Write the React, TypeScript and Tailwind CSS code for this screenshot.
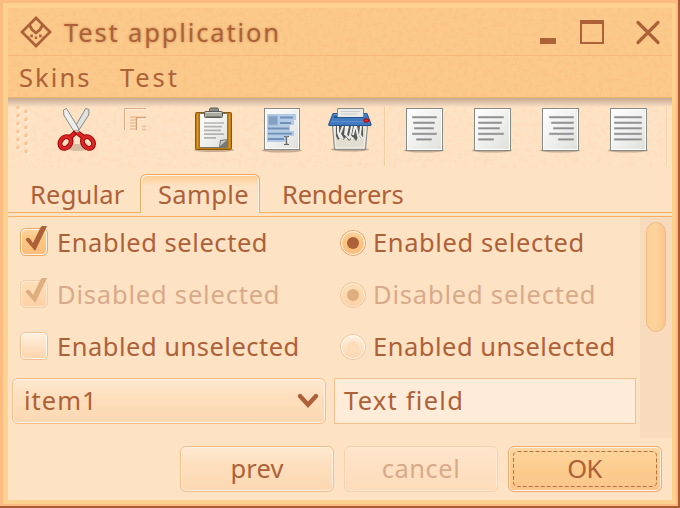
import React from "react";

function Grain({ id, opacity }: { id: string; opacity: number }) {
  return (
    <svg className="pointer-events-none absolute inset-0 h-full w-full" aria-hidden="true">
      <filter id={id} x="0" y="0" width="100%" height="100%">
        <feTurbulence type="fractalNoise" baseFrequency="0.2" numOctaves={3} seed={8} />
        <feColorMatrix values="0 0 0 0 0.93  0 0 0 0 0.4  0 0 0 0 0.18  6 0 0 0 -2.9" />
      </filter>
      <rect width="100%" height="100%" filter={`url(#${id})`} opacity={opacity} />
    </svg>
  );
}

function Page({ lines }: { lines: number[][] }) {
  return (
    <svg width="44" height="48" viewBox="0 0 44 48" className="shrink-0">
      <ellipse cx="22" cy="44.5" rx="20" ry="2" fill="#65483a" opacity=".35" />
      <rect x="4.5" y="2.5" width="36" height="42" fill="url(#paper)" stroke="#858a84" />
      <rect x="5.5" y="3.5" width="34" height="40" fill="none" stroke="#fff" />
      {lines.map(([x, w], i) => (
        <g key={i}>
          <rect x={x} y={10 + i * 5.55} width={w} height="2.4" fill="#b8b8b8" />
          <rect x={x + 0.6} y={10.6 + i * 5.55} width={w - 1.2} height="1.3" fill="#8d8d8d" />
        </g>
      ))}
    </svg>
  );
}

const centered = [[10, 25], [11, 22], [12, 20], [10, 25], [14, 16]];
const left = [[8, 26], [8, 24], [8, 22], [8, 26], [8, 16]];
const right = [[11, 25], [13, 23], [15, 21], [11, 25], [20, 16]];
const justified = [[8, 28], [8, 28], [8, 28], [8, 28], [8, 28]];

function Scissors() {
  return (
    <svg width="44" height="48" viewBox="0 0 44 48">
      <ellipse cx="23" cy="41.5" rx="12" ry="3.5" fill="#65483a" opacity=".25" />
      <path d="M30.7 2.5 34 3.5 33.7 9 22 27 18.5 23.5Z" fill="#dfe1de" stroke="#888a85" />
      <path d="M11.5 2.5 8.5 4 8.8 9 20 27 24 23Z" fill="#eeeeec" stroke="#888a85" />
      <g fill="none" stroke="#a40000" strokeWidth="5">
        <ellipse cx="10.5" cy="36.5" rx="5" ry="6.3" transform="rotate(38 10.5 36.5)" />
        <ellipse cx="33" cy="36.5" rx="5" ry="6.3" transform="rotate(-38 33 36.5)" />
        <path d="M15.5 31 21 26M28 31 23 27" />
      </g>
      <g fill="none" stroke="#d92626" strokeWidth="3">
        <ellipse cx="10.5" cy="36.5" rx="5" ry="6.3" transform="rotate(38 10.5 36.5)" />
        <ellipse cx="33" cy="36.5" rx="5" ry="6.3" transform="rotate(-38 33 36.5)" />
        <path d="M15.5 31 20 27M28 31 23 27" />
      </g>
      <circle cx="21.5" cy="25" r="1.4" fill="#b9bab6" />
    </svg>
  );
}

function GhostCopy() {
  return (
    <svg width="24" height="24" viewBox="0 0 24 24">
      <path d="M.5 22V.5H22" fill="none" stroke="#dfab84" />
      <path d="M1.5 22V1.5H22" fill="none" stroke="#fff0df" />
      <path d="M6 9h7M6 12h6M6 15h6M6 18h6M6 21h6M18 18.5h4M18 21.5h4" stroke="#e9c09b" strokeWidth="1.5" />
      <path d="M12.5 22V9.5H22" fill="none" stroke="#d99f75" strokeWidth="1.3" />
      <path d="M14 22V11H22" fill="none" stroke="#fff0df" />
    </svg>
  );
}

function Clipboard() {
  return (
    <svg width="44" height="46" viewBox="0 0 44 46">
      <ellipse cx="22" cy="43" rx="20" ry="2" fill="#65483a" opacity=".35" />
      <rect x="3.5" y="5.5" width="36" height="37" rx="1" fill="#c17d11" stroke="#8f5902" />
      <path d="M5.5 7v34M37.5 7v34" stroke="#da9b37" />
      <path d="M7.5 6.5h28v34h-28z" fill="url(#paper)" stroke="#777973" />
      <path d="M12 16h20M12 19.7h18M12 23.4h17M12 27.2h20M12 30.8h12" stroke="#b3b3b1" strokeWidth="1.7" />
      <path d="m27 40 1-7 8-1-1 8Z" fill="#777a75" /><path d="m28 39 1-5 6-1Z" fill="#c8cac6" />
      <path d="M17.5 5V2.5q0-1.5 1.5-1.5h6q1.5 0 1.5 1.5V5" fill="#8b8e85" stroke="#595c57" />
      <rect x="12.5" y="4.5" width="18" height="6" rx="1" fill="#a9ac9f" stroke="#595c57" />
      <path d="M14 5.5h15" stroke="#d3d7cf" /><path d="M14 9.5h15" stroke="#7e8176" />
    </svg>
  );
}

function SelectAll() {
  return (
    <svg width="44" height="48" viewBox="0 0 44 48">
      <ellipse cx="22" cy="44.5" rx="20" ry="2" fill="#65483a" opacity=".35" />
      <rect x="4.5" y="2.5" width="35" height="41" fill="url(#paper)" stroke="#888a85" />
      <rect x="5.5" y="3.5" width="33" height="39" fill="none" stroke="#fff" />
      <path d="M7 8h29v6h-2v5h-4v6h4v5h-7v6H7Z" fill="#b4cbe5" />
      <path d="M8.5 10h9v9h-9z" fill="#839fc2" stroke="#9eb7d5" />
      <path d="M20 11.5h13M20 17h11M8 22.5h21M8 27.7h24M8 33h16" stroke="#718fb7" strokeWidth="1.8" />
      <path d="M24 30.5h1q1.5 0 1.5 1.5v5q0 1.5-1.5 1.5h-1M29 30.5h-1q-1.5 0-1.5 1.5v5q0 1.5 1.5 1.5h1" fill="none" stroke="#666" strokeWidth="1.2" />
    </svg>
  );
}

function Shredder() {
  return (
    <svg width="44" height="48" viewBox="0 0 44 48">
      <ellipse cx="22" cy="43.5" rx="19" ry="2" fill="#65483a" opacity=".35" />
      <path d="M4.5 19.5h35l-2 24h-31Z" fill="#cfccc1" stroke="#888a85" />
      <path d="M6 21h32l-2 21H8Z" fill="#e1ddd1" stroke="#f5f3ed" />
      <path d="M8 20v10l2 4 3-3 2 3 3-3 3 4 4-4 3 4 2-4 5 2V20Z" fill="#585a56" />
      <path d="M10 20v7l2 5M15 20l-3 8 3 5M18 20l-1 9M20 20l-2 9 4 4M24 20l-2 10 3 3M27 20l-2 9M28 20l2 10 2 3M33 20l-1 9 3 4" fill="none" stroke="#eeeeec" strokeWidth="2" />
      <path d="M5 7.5h34l4 10.5v1.5H.8V18Z" fill="#427ac0" stroke="#244f89" />
      <path d="M5.5 8.5h33M3 15.5h38" stroke="#5f91d0" />
      <path d="M6 11h30" stroke="#26538e" strokeWidth="2" />
      <path d="M9.5 11V2.5h26V11" fill="#e9eae8" stroke="#858783" />
      <path d="M13 5.5h19M13 8h16" stroke="#ccc" />
      <rect x="36" y="13" width="4.5" height="3" rx="1" fill="#ef2929" stroke="#a40000" />
    </svg>
  );
}

function Check({ dim = false }: { dim?: boolean }) {
  return (
    <svg width="30" height="34" viewBox="0 0 30 34" className="shrink-0">
      <rect x="1.5" y="4.5" width="27" height="27" rx="5" fill={dim ? "url(#dimFill)" : "url(#activeFill)"} stroke={dim ? "#f5cca4" : "#efa660"} />
      <rect x="2.5" y="5.5" width="25" height="25" rx="4" fill="none" stroke="#fff" opacity={dim ? 0.45 : 0.85} />
      <path d="M7.3 14.4Q9.6 12.6 11.6 15.5L14 19 21.5 3.5Q22.2 2 23.5 2H28L16.4 26.5H15.8Q14.5 25.5 13.4 23.8L7.3 16.8Q6.4 15.2 7.3 14.4Z" fill={dim ? "#dfae80" : "#ad6138"} />
    </svg>
  );
}

function EmptyBox() {
  return (
    <svg width="30" height="34" viewBox="0 0 30 34" className="shrink-0">
      <rect x="1.5" y="4.5" width="27" height="27" rx="5" fill="url(#plainFill)" stroke="#f4bd8e" />
      <rect x="2.5" y="5.5" width="25" height="25" rx="4" fill="none" stroke="#fff" opacity=".8" />
    </svg>
  );
}

function Radio({ state }: { state: "on" | "dim" | "off" }) {
  const fill = state === "on" ? "url(#activeFill)" : state === "dim" ? "url(#dimFill)" : "url(#plainFill)";
  return (
    <svg width="26" height="26" viewBox="0 0 26 26" className="shrink-0">
      <circle cx="13" cy="13" r="12.5" fill={fill} stroke={state === "on" ? "#e9a267" : "#f2c399"} />
      <circle cx="13" cy="13" r="11.5" fill="none" stroke="#fff" opacity={state === "dim" ? 0.45 : 0.9} />
      <circle cx="13" cy="13" r="6" fill={state === "on" ? "#ad6138" : state === "dim" ? "#dfae80" : "#fcdcb9"} />
    </svg>
  );
}

function Defs() {
  return (
    <svg width="0" height="0" className="absolute">
      <defs>
        <linearGradient id="paper" x1="0" y1="0" x2="1" y2="1"><stop stopColor="#fefefe" /><stop offset=".5" stopColor="#f1f1f0" /><stop offset="1" stopColor="#deded9" /></linearGradient>
        <linearGradient id="activeFill" x2="0" y2="1"><stop stopColor="#fdd49e" /><stop offset=".4" stopColor="#fcc683" /><stop offset="1" stopColor="#fbbd7b" /></linearGradient>
        <linearGradient id="dimFill" x2="0" y2="1"><stop stopColor="#fee0ba" /><stop offset="1" stopColor="#fdd0a3" /></linearGradient>
        <linearGradient id="plainFill" x2="0" y2="1"><stop stopColor="#fff1e0" /><stop offset="1" stopColor="#fdd3a9" /></linearGradient>
      </defs>
    </svg>
  );
}

export default function App() {
  return (
    <div className="h-[508px] w-[680px] overflow-hidden bg-[#a95b33] pr-[2px] pb-[2px] font-['Noto_Sans',sans-serif] text-[25.5px] leading-[36px] whitespace-nowrap text-[#ad6138]">
      <Defs />
      <div className="h-full bg-[#fcbb80] pt-[3px] pr-[2px] pb-[2px] pl-[3px]">
        <div className="h-full bg-[#fcd291] pt-[5px] pr-[4px] pb-[4px] pl-[5px]">
          <main className="flex h-full flex-col bg-[#fee2c4]">
            <header className="relative h-[90px] shrink-0 border-b border-[#f2b36f] bg-[#fbca8b]">
              <Grain id="grain-head" opacity={0.15} />
              <div className="relative flex h-[48px] items-start border-b border-[#f8b77b] pl-[12px]">
                <svg width="32" height="32" viewBox="0 0 32 32" className="mt-[8px]">
                  <path d="m16 2 14 14-14 14L2 16Z" fill="none" stroke="#ad6138" strokeWidth="2.7" />
                  <path d="m9.5 9 2.5 4.5 4 3.5 4-3.5L22.5 9" fill="none" stroke="#ad6138" strokeWidth="2.8" />
                  <path d="M10.3 18.6h2.6v2.6h-2.6zM19.1 18.6h2.6v2.6h-2.6zM7 20.5h2.4v2.4H7zM22.6 20.5H25v2.4h-2.4zM14.8 20.6h2.4v2.4h-2.4z" fill="#ad6138" />
                </svg>
                <h1 className="mt-[6px] ml-[12px] text-[25.5px] leading-[36px] tracking-[1.85px] [text-shadow:0_0_3px_#c88b50]"><span className="font-normal">Test application</span></h1>
                <svg width="130" height="32" viewBox="0 0 130 32" className="mt-[8px] mr-[3px] ml-auto">
                  <path d="M1 22h16v6H1z" fill="#ad6138" />
                  <path d="M41 4h24v24H41zM43 8v18h20V8z" fill="#ad6138" fillRule="evenodd" />
                  <path d="M99 6.5 119 26.5M119 6.5 99 26.5" stroke="#ad6138" strokeWidth="3.2" strokeLinecap="round" />
                </svg>
              </div>
              <nav className="relative flex pt-[3px] pl-[11px]">
                <span className="w-[101px] tracking-[2.1px]">Skins</span>
                <span className="tracking-[2.9px]">Test</span>
              </nav>
            </header>

            <section className="relative h-[70px] shrink-0">
              <Grain id="grain-tools" opacity={0.05} />
              <div className="pointer-events-none absolute inset-x-0 top-0 h-[9px] bg-linear-to-b from-[#c5a892] to-[#fbe0c4]" />
              <div className="relative flex items-start pt-[8px]">
                <svg width="22" height="50" viewBox="0 0 22 50" className="mr-[19px] ml-[6px]">
                  {[0, 1, 2, 3, 4, 5].map((n) => (
                    <g key={n}>
                      <circle cx="5" cy={2.5 + n * 8} r="2.3" fill="#fff0df" />
                      <circle cx="4" cy={1.5 + n * 8} r="2" fill="#fac692" />
                      <circle cx="13" cy={6.5 + n * 8} r="2.3" fill="#fff0df" />
                      <circle cx="12" cy={5.5 + n * 8} r="2" fill="#fac692" />
                    </g>
                  ))}
                </svg>
                <div className="w-[69px]"><Scissors /></div>
                <div className="w-[68px] pt-[2px]"><GhostCopy /></div>
                <div className="w-[68px] pt-px"><Clipboard /></div>
                <div className="w-[68px]"><SelectAll /></div>
                <div className="w-[56px]"><Shredder /></div>
                <div className="mr-[16px] h-[60px] w-[2px] border-l border-[#fbc99b] bg-[#fff0df]" />
                <div className="flex gap-[24px]">
                  <Page lines={centered} /><Page lines={left} /><Page lines={right} /><Page lines={justified} />
                </div>
                <div className="ml-[16px] h-[60px] w-[2px] border-l border-[#fbd0a6] bg-[#fff0df]" />
              </div>
            </section>

            <nav className="flex h-[49px] shrink-0 items-end border-b border-[#faae62] pb-[3px]">
              <div className="flex h-[39px] w-[132px] border-b border-[#faae62] pt-[2px] pl-[22px] tracking-[0.2px]">Regular</div>
              <div className="h-[39px] w-[120px] rounded-t-[6px] border border-b-0 border-[#f5a65f] bg-[linear-gradient(#fccb8c,#fee2c4_11px)] pt-px pl-[17px] tracking-[0.35px] shadow-[inset_1px_1px_0_#fff4e7,inset_-1px_0_0_#fff4e7]">Sample</div>
              <div className="h-[39px] flex-1 border-b border-[#faae62] pt-[2px] pl-[22px] tracking-[-0.2px]">Renderers</div>
            </nav>

            <section className="flex h-[221px] shrink-0">
              <div className="w-[632px] pl-[11px]">
                <div className="grid grid-cols-[321px_1fr] grid-rows-[52px_52px_52px]">
                  <label className="flex items-start pt-[7px]"><Check /><span className="ml-[8px] tracking-[0.55px]">Enabled selected</span></label>
                  <label className="flex items-start pt-[7px]"><span className="flex pt-[6px]"><Radio state="on" /></span><span className="ml-[7px] tracking-[0.6px]">Enabled selected</span></label>
                  <label className="flex items-start pt-[7px]"><Check dim /><span className="ml-[8px] tracking-[0.8px] text-[#d8aa8a]">Disabled selected</span></label>
                  <label className="flex items-start pt-[7px]"><span className="flex pt-[6px]"><Radio state="dim" /></span><span className="ml-[7px] tracking-[0.8px] text-[#d8aa8a]">Disabled selected</span></label>
                  <label className="flex items-start pt-[7px]"><EmptyBox /><span className="ml-[8px] tracking-[0.5px]">Enabled unselected</span></label>
                  <label className="flex items-start pt-[7px]"><span className="flex pt-[6px]"><Radio state="off" /></span><span className="ml-[7px] tracking-[0.5px]">Enabled unselected</span></label>
                </div>
                <div className="-ml-[7px] flex gap-[8px] pt-[5px]">
                  <div className="flex h-[46px] w-[314px] justify-between rounded-[6px] border border-[#f5bd89] bg-[linear-gradient(#fee9d0,#fddebc_45%,#fcd8b2)] pt-[3px] pr-[6px] pl-[11px] shadow-[inset_0_0_0_1px_#fff2e3]">
                    <span className="tracking-[1px]">item1</span>
                    <svg width="22" height="20" viewBox="0 0 22 20" className="mt-[9px]"><path d="m3 5 8 8.7 8-8.7" fill="none" stroke="#ad6138" strokeWidth="4.4" strokeLinecap="round" /></svg>
                  </div>
                  <div className="h-[46px] w-[302px] border border-[#f3bf8f] bg-[#ffecd8] pt-[3px] pl-[9px] tracking-[1.25px]">Text field</div>
                </div>
              </div>
              <div className="w-[32px] bg-[#f8dabd] pt-[5px] pl-[6px]">
                <div className="h-[110px] w-[20px] rounded-full border border-[#f2bc87] bg-linear-to-r from-[#fcd099] via-[#fcd49b] to-[#fac48c]" />
              </div>
            </section>

            <footer className="flex flex-1 justify-end gap-[10px] pt-[8px] pr-[10px] text-center">
              <button className="h-[46px] w-[154px] rounded-[6px] border border-[#f5bd89] bg-[linear-gradient(#fee9d0,#fddebc_45%,#fcd8b2)] pb-[2px] tracking-[0.1px] shadow-[inset_0_0_0_1px_#fff2e3]">prev</button>
              <button className="h-[46px] w-[154px] rounded-[6px] border border-[#f9d0aa] bg-[linear-gradient(#fee5ca,#fddcba)] pb-[2px] text-[#d8aa8a] shadow-[inset_0_0_0_1px_#fee9d4]"><span className="tracking-[0.5px]">cancel</span></button>
              <button className="flex h-[46px] w-[154px] rounded-[6px] border border-[#efab71] bg-[linear-gradient(#fdd69f,#fccb8d_55%,#fbc58e)] p-[4px] shadow-[inset_0_0_0_1px_#fff2e3]">
                <span className="relative flex h-full w-full items-center justify-center pr-px pb-[2px] tracking-[-0.5px]">
                  <svg className="absolute inset-0" width="144" height="36" viewBox="0 0 144 36"><rect x=".5" y=".5" width="143" height="35" rx="4" fill="none" stroke="#b96f40" strokeDasharray="4 2" /></svg>
                  OK
                </span>
              </button>
            </footer>
          </main>
        </div>
      </div>
    </div>
  );
}
